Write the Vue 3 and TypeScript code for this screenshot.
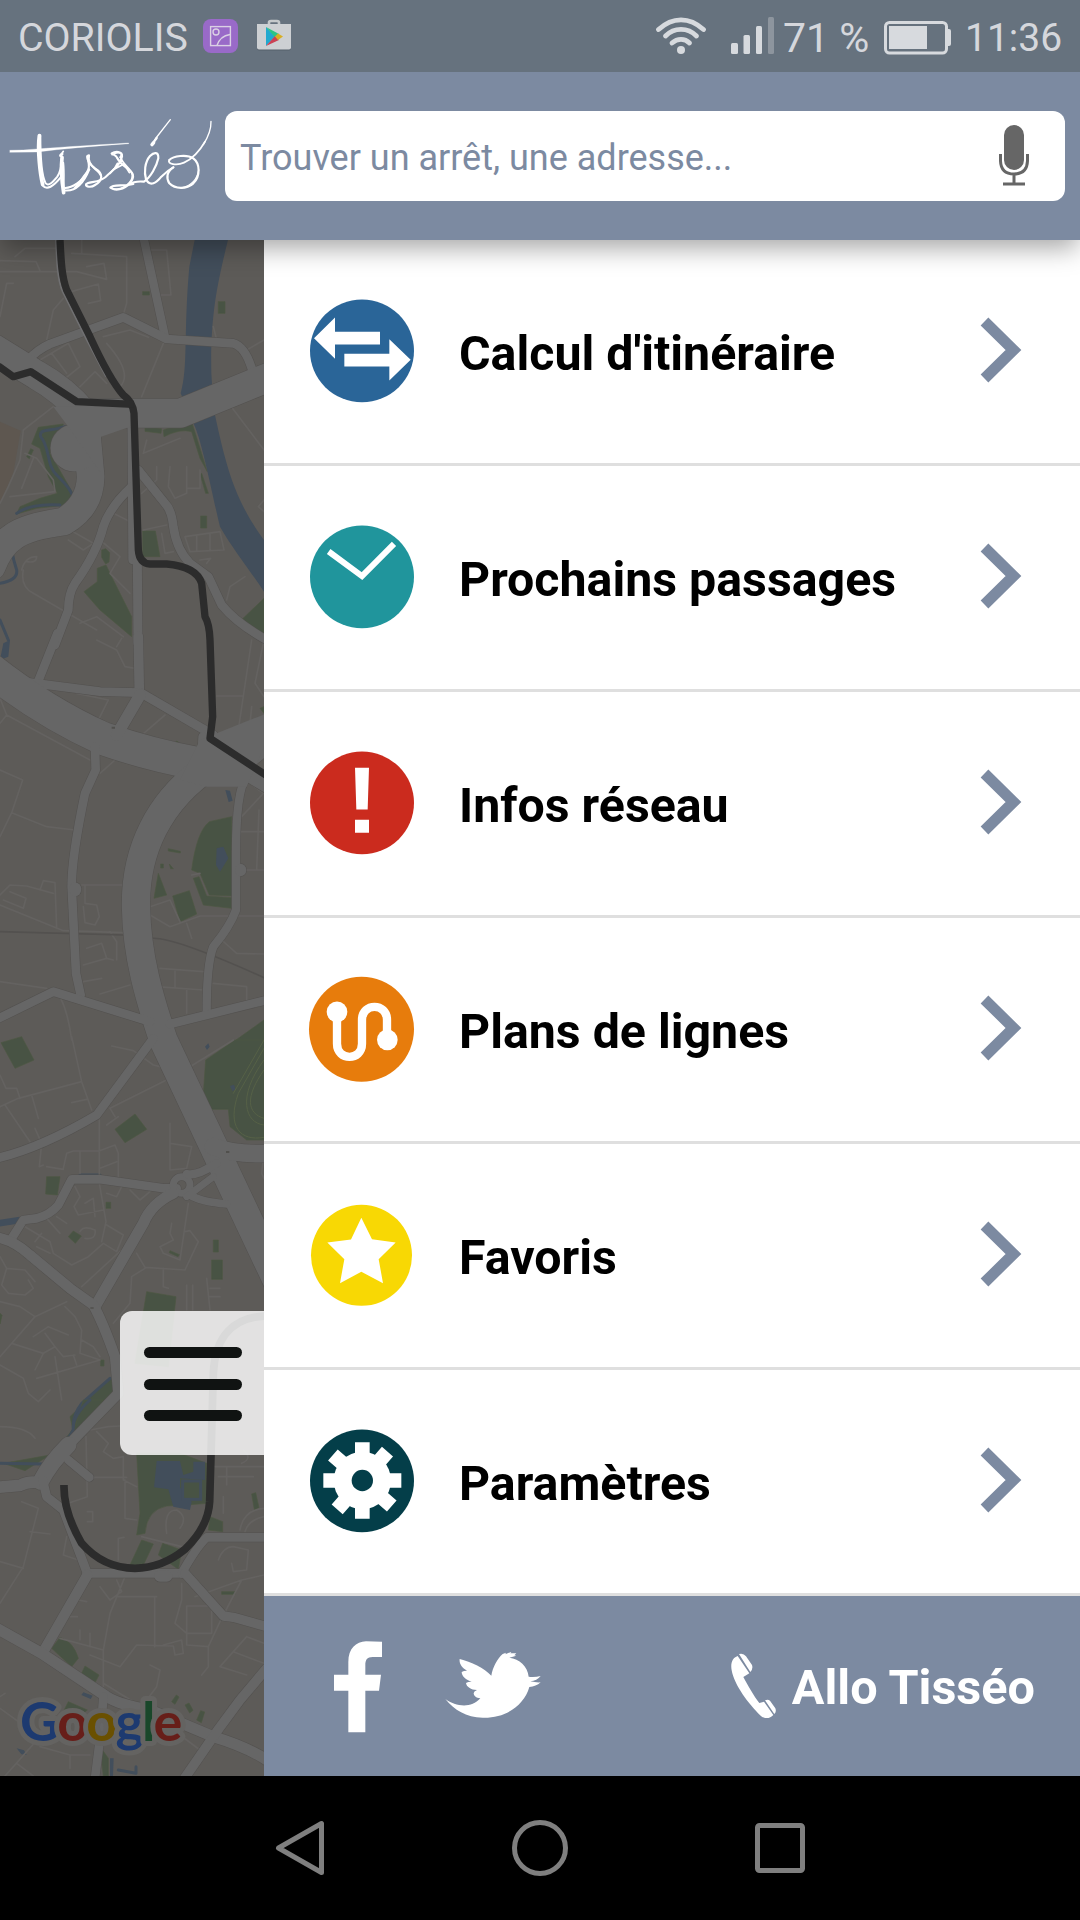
<script setup lang="ts">
interface Road { d: string; w: number }
interface Tile { y: number; parks: string; water: string; streams: string; minor: string; rail?: string; roads: Road[] }
interface Entry { id: string; label: string; box: string }

const entries: Entry[] = [
  { id: 'route', label: "Calcul d'itinéraire", box: '129 111.5 330 330' },
  { id: 'clock', label: 'Prochains passages', box: '129 789.5 330 330' },
  { id: 'info', label: 'Infos réseau', box: '129 87.5 330 330' },
  { id: 'lines', label: 'Plans de lignes', box: '129 765.5 330 330' },
  { id: 'star', label: 'Favoris', box: '129 63.5 330 330' },
  { id: 'gear', label: 'Paramètres', box: '129 741.5 330 330' },
]

const tiles: Tile[] = [
  {
    y: 0,
    parks: 'M492 590L490 570 560 545 575 545 622 695 600 655 575 575Q540 565 492 590ZM558 430l12 30-22 8ZM435 558l50 8-2 14-48-6ZM428 873H466L480 950H428ZM190 552L115 562 95 612 120 625 145 710 172 760 120 775 60 800 50 822 110 805 200 795 222 765 150 640ZM305 930l12-4 12 12-2 28-10 6-12-20ZM318 975L335 1010 395 1130V1190L300 1110 252 1055 292 1025V985ZM792 1075V1185L722 1142ZM428 155h20v10h-20ZM655 185h20v35h-20ZM605 700l20 60h-8l-16-55ZM602 828h18v36h-18ZM80 650l12-24 8 4-12 26Z',
    water: 'M585-5H685C655 120 630 220 634 400L640 500C660 600 680 680 705 745 735 820 770 870 792 900V1055C750 990 700 930 660 860 640 780 610 620 585 560L542 460C565 380 550 280 568 80Z',
    streams: 'M195 560C150 575 115 565 122 590 150 620 140 680 170 705 200 735 215 750 225 790M50 820Q90 790 180 795M35 930Q40 960 50 990 55 1020 0 1030M0 1140L25 1200',
    minor: 'M0 95H230L320 118 312 70 260 80M0 62L108 65 120 92M45 50L75 25H170M215 40L380 50V190L368 230M245 0V40M455 30H500L513 165H470M195 160L295 132 302 182 265 190M140 300L160 210 190 175M0 230L20 130H40M310 290L390 270 445 292M490 310L425 470M320 310Q400 400 360 440M120 360L205 310 240 380 190 420M155 340L200 400M240 440L285 395 320 430M160 500L70 570 60 660 25 740 0 790M75 640L110 655 160 720 165 755 30 770M100 655L65 745M640 260L650 300M740 330L792 300M690 495L792 630M440 600L430 640 540 595M470 680V720L425 760M510 680L505 740 525 775 560 760V680M600 690V745H560M792 780L775 800 792 815M430 870L500 855M485 880L495 940 520 935M555 890L660 875 672 930 570 935ZM590 885V930M630 880V930M70 990Q60 1040 100 1060L290 1170M65 990Q75 950 110 950 110 970 80 965M210 870L280 910 250 930 205 900M300 900L360 950 330 1000 390 1060M340 820L400 850M240 1150L290 1130 370 1190M680 1080L690 1040 735 1010M600 960L632 955 620 970',
    roads: [
      { d: 'M430-10L495 290', w: 24 },
      { d: 'M85 360Q110 330 150 312L370 232 500 297 700 310Q735 320 755 385', w: 25 },
      { d: 'M395 500L398 960', w: 25 },
      { d: 'M-20 325L110 405Q190 450 250 520H540L810 410', w: 86 },
      { d: 'M245 510L262 600 272 710Q270 800 190 845 80 860 40 890 0 915-25 980', w: 82 },
      { d: 'M222 624h2', w: 140 },
      { d: 'M395 740Q330 800 310 860 290 940 225 1030 205 1060 205 1110L165 1215', w: 25 },
      { d: 'M415 690L495 790Q515 810 520 860 530 930 570 970L625 1010 665 1095Q710 1150 800 1200', w: 25 },
      { d: 'M412 960L414 1210', w: 26 },
    ],
  },
  {
    y: 1200,
    parks: 'M695 530L628 545Q590 575 575 690L600 700 628 765 697 768ZM580 715L597 710 620 768 695 773V805L610 795ZM518 768L568 752 590 822 540 845ZM475 700L500 765 462 775ZM708 1200L792 1140V1205ZM780 205l12-5v20ZM520 315l10-12 6 4-10 14ZM505 626l36 8v5l-36-6ZM482 672h8v12h-8Zm26 0l12 14h-8Z',
    water: 'M650 625l20-5 15 35-25 40-12-20ZM676 450l14 2 8 30-12 4ZM10 10L30 0 25 50 0 60Z',
    streams: '',
    minor: 'M0 795L190 872 370 878M0 390L68 420 35 518 0 590M35 518L140 560 225 570M0 175L20 225 270 360M20 225L0 250M0 765L30 735 80 738 160 760M120 750L130 722 165 728 170 865M10 780L70 805 78 775 30 755M245 735H370M255 735V790L290 795 298 830 285 855 255 848 250 800M450 800L510 780 540 845M450 825L510 860 600 828H792M560 850L575 895M720 575H792M735 690H792M777 510L770 690M725 530L790 460 750 430M650 168H730M755 0L715 270M792 0L765 130 792 170M755 200L750 250M480 985L610 995M525 990V1040M470 1040L610 1050M560 1050V1120M640 1030L740 1040V1080M665 900L710 940 792 942M300 1062L390 1035M250 1025L305 1015M0 1025L140 1045M260 925L305 910 320 955 340 960M320 955L250 975M420 290L495 225M290 250L325 180 230 160M290 0L350 30 375 80 405 85M350 20L365-5M300 400L345 360M575 705L600 700M180 1070Q205 1120 215 1200M350 905V960M330 875L350 905',
    rail: 'M0 875L370 885M455 895Q520 890 792 1013',
    roads: [
      { d: 'M172-20L110 135', w: 25 },
      { d: 'M415-10L418 165', w: 28 },
      { d: 'M90 128L300 155 420 158', w: 25 },
      { d: 'M-40 80Q130 215 310 296 450 345 600 372L690 375 810 275', w: 98 },
      { d: 'M640 370C470 480 405 640 408 800 410 950 450 1080 490 1200L830 1920', w: 84 },
      { d: 'M425 160L640 285', w: 26 },
      { d: 'M420 165L350 285', w: 34 },
      { d: 'M608 290L605 350', w: 25 },
      { d: 'M700 375L800 435', w: 45 },
      { d: 'M285 320L287 390 255 460Q215 650 215 740L228 1000 242 1065', w: 25 },
      { d: 'M740 410Q708 450 708 640V810Q690 860 640 920 620 970 620 1115', w: 24 },
      { d: 'M722 688v4', w: 32 },
      { d: 'M226 745v6', w: 34 },
      { d: 'M-10 1138L160 1055 450 1145', w: 25 },
      { d: 'M510 1152L800 1080', w: 25 },
    ],
  },
  {
    y: 2400,
    parks: 'M3 8L65-10 102 60 45 85ZM345 268L405 222 440 268 375 308ZM617 60L705 0H792V300H740L690 260 685 208H607ZM140 410H180L172 465 137 462ZM205 590l15-17 24 15-18 22ZM635 660h32v58h-32ZM640 600h15v36h-15ZM440 755L528 770 505 980 405 970ZM345 1000L355 1070 220 1175 210 1130ZM318 487h14v18h-14ZM302 960h10v18h-10ZM510 632l28 12-4 6-26-12ZM0 820l6 6-6 26Z',
    water: 'M615 20l10-10 4 10-8 10ZM690 138l12-4 4 14-8 6Z',
    streams: 'M330 1015L245 1090Q215 1130 222 1165L205 1200M240 405H300',
    minor: 'M0 200L55 175 245 125M215-10L245 125 275 210M215 188L260 178M15 195L90 305M0 105L18 145 50 145 60 175M95 165L115 235M105 265L125 310 118 380 130 375M335 18L400 32 460 75 480 80M570 80L700 0M330 205L495 122M345 230L330 205M320 255L355 230M298 240V405M190 385L200 340 220 333H297L345 315 355 340V410M240 335V400M300 385L350 365M140 380L190 388M510 250V390L560 385 575 320 510 310M792 340L785 400 792 415M225 440L240 470 222 500 235 525 310 510M255 490L280 475 285 530M298 430L318 545 305 605M320 460L350 470 370 430M390 450L420 480 450 455M170 530L200 550M140 535L180 580M75 560L150 605 160 640 215 675 265 650 310 610 350 635 370 585 320 555M105 605L125 580M110 620L150 640M240 575Q250 555 285 570 290 600 255 595M245 740L370 625M410 640L435 682 555 690 595 605 570 572 555 575M515 550L510 580 520 600 480 620 490 640 540 660 565 490M490 685V740L505 745M435 685L395 710 390 790 340 850M560 735V810M578 735V810M620 715L630 810M630 745H660M630 770H660M0 650L20 685 5 735 25 760 75 765 100 745 85 720M20 685L75 690 105 725M0 950L105 830 200 785M0 785L60 800 105 830M100 890L145 860 205 885M195 800L225 830 245 870 240 940 300 960M35 910L130 940 165 920 190 950 225 945M135 880L165 920M130 940L105 990M165 950L185 1080M110 1015L300 960M0 975L70 1015 85 1060 115 1085 150 1050M245 900L280 920 300 950M220 945L230 975',
    roads: [
      { d: 'M-10 355Q120 325 290 225L460-5', w: 25 },
      { d: 'M35 595L70 540 110 535Q150 525 175 495L215 418 300 418 490 445 530 445', w: 25 },
      { d: 'M520 435a25 25 0 1 1 50 0a25 25 0 1 1 -50 0', w: 20 },
      { d: 'M570 465Q600 485 680 492', w: 22 },
      { d: 'M560 402Q590 410 650 370', w: 24 },
      { d: 'M560 470L640 410', w: 20 },
      { d: 'M640 320Q700 345 810 340', w: 52 },
      { d: 'M520 460Q455 490 430 550L285 800', w: 32 },
      { d: 'M-10 592Q40 600 90 645L210 745 280 795Q310 850 345 950L355 1060 205 1215', w: 30 },
    ],
  },
  {
    y: 3480,
    parks: 'M410 160H540L620 190V310L560 315 500 318Q440 330 435 400L410 405 420 340ZM425 420L460 432 430 495H390ZM488 430L545 450 535 508 475 465ZM630 350L668 365V395L625 390ZM180 712Q220 725 235 775L215 800 155 745ZM255 798L297 825 283 852 240 830ZM205 905L262 930 250 940 190 935ZM250 0H310L190 145 140 185 225 80ZM10 190L150 165 75 212ZM755 282l12-4 10 45-14 6ZM665 575h40v8h-40ZM515 905l14-20 8 6-12 22ZM555 915l12-6 12 22-10 8ZM590 960l12-28 12 4-10 32ZM300 1040L325 1075V1128H310Z',
    water: 'M470 183H540L550 225 580 215V185H615V240L540 235V262L575 305 570 330 520 320 505 268 462 262ZM250 877l28 10-6 10-28-12ZM50 1045l22 6 8 14-16-2ZM330 1075h11l-2 53h-9Z',
    streams: 'M270 0Q215 50 220 90 200 130 130 192L0 190M355 1110L408 1120V1100',
    minor: 'M0 80Q80 80 105 115M270 90L325 80 360 78M290 95L325 130 310 155 340 175 370 170V240L410 260M258 110L262 290 205 310M262 232H380M375 240V355L410 360M65 305L115 325 70 500 0 610M0 485L70 505M90 395L150 402M200 410L190 465 235 480M262 335H278V365H262M355 480V415L372 412M375 530L330 640 310 750V890M300 560L330 600 365 575 350 540M464 590V740M350 590H470M235 600L260 605M210 650H232M180 715L310 750M240 690V720M270 700V740M360 800L410 735 520 738 525 765 550 760 545 720 490 735M270 765L360 800M450 795L480 810 470 860 440 900M560 618H635V700H560ZM545 550V600L525 670 560 700M560 700V735L625 740V800L605 825M725 540L660 665 625 740M585 590L725 540 792 525M740 710L660 800 740 825M740 710L792 730M700 755L792 790M425 410L545 440M500 400Q490 330 530 330 565 350 540 385M640 200H792M680 200V255M655 230H760M670 290V340M725 190Q760 175 730 150M792 325Q730 330 720 390M792 350Q745 360 735 395M655 480Q670 440 700 440L745 450 740 510 700 515 695 490M310 850L400 905M520 990L600 1050M0 890L15 880M0 925L90 990M15 1128L120 1010M50 1090L100 1128M120 1040L210 1065H270M210 1065V1105',
    roads: [
      { d: 'M205 180L268 232', w: 25 },
      { d: 'M205 135Q150 190 122 245', w: 48 },
      { d: 'M125 250Q90 240 60 256L-10 262', w: 34 },
      { d: 'M128 240L140 290 190 330 260 515', w: 26 },
      { d: 'M260 520H545', w: 25 },
      { d: 'M480 528h20', w: 34 },
      { d: 'M545 520Q590 440 620 412H800', w: 25 },
      { d: 'M555 520L670 648 700 652 800 680', w: 27 },
      { d: 'M262 525L130 755', w: 30 },
      { d: 'M-15 682L125 760 320 890Q360 915 450 930L640 1010Q740 1040 800 1080', w: 32 },
      { d: 'M310 890L302 1000 285 1135', w: 25 },
      { d: 'M800 805L720 900 650 995 550 1140', w: 28 },
    ],
  },
]
</script>

<template>
  <div class="screen">
    <header class="status">
      <span class="carrier">CORIOLIS</span>
      <svg class="gallery" width="35" height="34" viewBox="0 0 35 34">
        <rect width="35" height="34" rx="8" fill="#996ac8" />
        <g fill="none" stroke="#dad0e4" stroke-width="1.400">
          <rect x="7.600" y="7.600" width="19.800" height="19" />
          <circle cx="13" cy="13" r="3" />
          <path d="M14 26.500Q17 17 27 15.500" />
        </g>
      </svg>
      <svg class="store" width="34" height="32" viewBox="0 0 34 32">
        <path d="M12 6V3.500Q12 2 14 2H20Q22 2 22 3.500V6" fill="none" stroke="#c5c9cb" stroke-width="2.600" />
        <path d="M0 6H34V29Q34 31.500 32 31.500H2Q0 31.500 0 29Z" fill="#55606b" />
        <path d="M0 5H34V28.500Q34 30.500 32 30.500H2Q0 30.500 0 28.500Z" fill="#cdd0d3" />
        <path d="M9 8L18 17.500 9 27Z" fill="#22a9cf" />
        <path d="M9 8L22 15 18 18.500Z" fill="#2cc584" />
        <path d="M9 27L22 21 18 17Z" fill="#ca4254" />
        <path d="M21 14.500L26 17.500 21 21 18 17.500Z" fill="#d8ae23" />
      </svg>
      <span class="spacer"></span>
      <svg class="wifi" width="50" height="38" viewBox="0 0 50 38">
        <g fill="none" stroke="#d7dade" stroke-width="4.800" stroke-linecap="round">
          <path d="M2.500 12.500Q13 2.800 25 2.800T47.500 12.500" />
          <path d="M9.500 19Q16 12.300 25 12.300T40.500 19" />
          <path d="M16 26Q20 22.300 25 22.300T33.500 26" />
        </g>
        <circle cx="25" cy="33" r="4" fill="#d7dade" />
      </svg>
      <svg class="signal" width="43" height="38" viewBox="0 0 43 38" fill="#d7dade">
        <rect y="26" width="7" height="11" rx="1.500" />
        <rect x="12.500" y="18" width="6.500" height="19" rx="1.500" />
        <rect x="25" y="9" width="6" height="28" rx="1.500" />
        <rect x="37" width="6" height="37" rx="1.500" fill="#8d959e" />
      </svg>
      <span class="percent">71 %</span>
      <svg class="battery" width="67" height="34" viewBox="0 0 67 34">
        <rect x="1.500" y="1.500" width="61" height="30.500" rx="4" fill="none" stroke="#d7dade" stroke-width="3" />
        <path d="M5 5H43V28H5ZM64 8H65Q67 8 67 10V23Q67 25 65 25H64Z" fill="#d7dade" />
      </svg>
      <span class="time">11:36</span>
    </header>

    <div class="bar">
      <svg class="logo" width="225" height="100" viewBox="0 -12 675 300" fill="none" stroke="#fff" stroke-linecap="round" stroke-linejoin="round">
        <path d="M30 121L70 120Q200 110 386 99V101Q220 112 110 126L30 127Z" fill="#fff" stroke="#fff" stroke-width="1" />
        <path d="M118 77C112 120 120 190 128 224" stroke-width="11" />
        <path d="M121 76C121 130 122 190 136 218 145 232 160 215 172 200 180 188 185 165 187 142" stroke-width="6" />
        <path d="M128 226C140 242 160 230 184 200" stroke-width="6" />
        <path d="M186 143C182 180 188 230 191 248" stroke-width="11" />
        <path d="M190 158C194 190 190 225 192 248M181 138L186 130 190 124" stroke-width="5" />
        <path d="M182 136L186 132" stroke-width="9" />
        <path d="M194 234C215 235 248 215 262 185 274 165 262 155 262 138L267 136Q262 160 285 175C310 190 310 210 285 225 272 234 258 230 258 224" stroke-width="6.500" />
        <path d="M192 241C225 246 250 222 268 178M262 140C262 168 298 180 302 196M222 236C238 222 245 205 262 186" stroke-width="6" />
        <path d="M258 224C262 212 300 222 322 196 345 176 362 162 366 140 368 122 345 124 335 130Q350 138 352 145 360 160 378 172C402 188 405 200 390 220 372 240 345 243 331 233 338 222 370 230 400 222" stroke-width="6.500" />
        <path d="M336 134C355 124 372 128 360 142M362 142C368 165 395 175 397 196 398 220 368 238 342 238M352 160L342 178 372 162 388 188M365 150L330 190" stroke-width="5" />
        <path d="M385 224Q405 212 432 215C452 202 470 168 475 145 476 125 462 126 450 138 434 156 432 188 438 208 450 232 470 218 484 200 498 186 505 180 520 172" stroke-width="6.500" />
        <path d="M520 172C500 185 498 205 508 220 525 238 560 238 580 220 602 198 600 160 580 145 560 132 520 138 508 150" stroke-width="6.500" />
        <path d="M508 150C500 162 530 168 552 158 575 148 600 122 615 95" stroke-width="5.500" />
        <path d="M610 104Q634 66 633 34M545 234Q590 222 596 180" stroke-width="4" />
        <path d="M456 104L468 84 511 29" stroke-width="4" />
        <path d="M456 103L470 84" stroke-width="7" />
        <path d="M456 104L461 98" stroke-width="10" />
      </svg>
      <div class="search">
        <span>Trouver un arrêt, une adresse...</span>
        <svg width="30" height="62" viewBox="0 0 30 62">
          <rect x="5" y="0" width="20" height="45" rx="10" fill="#666" />
          <path d="M1.500 29V36Q2 49 15 49T28.500 36V29M15 49V59M4 59H26" fill="none" stroke="#666" stroke-width="3" />
        </svg>
      </div>
    </div>

    <main class="body">
      <section class="map">
        <svg width="264" height="1536" viewBox="0 0 792 4608">
          <rect width="792" height="4608" fill="#5d5b58" />
          <path d="M0 545L62 572 40 700 0 790Z" fill="#5e5750" />
          <g v-for="t in tiles" :key="'p' + t.y" :transform="`translate(0 ${t.y})`">
            <path :d="t.parks" fill="#485344" stroke="#4d5843" stroke-width="2" />
            <path :d="t.water" fill="#424e5b" />
            <path :d="t.streams" class="line" stroke="#424e5b" stroke-width="9" />
            <path :d="t.minor" class="line" stroke="#646260" stroke-width="5" />
            <path v-if="t.rail" :d="t.rail" class="line" stroke="#53514f" stroke-width="5" />
          </g>
          <path d="M-5 2950L60 2940" stroke="#424e5b" stroke-width="20" />
          <path d="M792 2425L715 2560C680 2660 720 2705 792 2692M792 2400L700 2560M792 2490C735 2570 740 2620 792 2635M792 2460C710 2570 735 2650 792 2655" class="line" stroke="#566147" stroke-width="3" />
          <rect x="548" y="3723" width="54" height="55" fill="#485344" stroke="#424e5b" stroke-width="9" />
          <g v-for="t in tiles" :key="'c' + t.y" :transform="`translate(0 ${t.y})`">
            <path v-for="(r, i) in t.roads" :key="i" :d="r.d" class="line" stroke="#53514f" :stroke-width="r.w + 4" />
          </g>
          <g v-for="t in tiles" :key="'r' + t.y" :transform="`translate(0 ${t.y})`">
            <path v-for="(r, i) in t.roads" :key="i" :d="r.d" class="line" stroke="#666" :stroke-width="r.w + 1" />
          </g>
          <path d="M160 500H390V560L303 590V700L205 560ZM600 1500L800 1420V1500L740 1640H620L540 1620Z" fill="#666" />
          <path d="M340 1460v6M276 3202v4M683 2733v6" stroke="#51504d" stroke-width="10" />
          <path d="M168 0C170 60 172 120 188 155L258 295 318 410" fill="none" stroke="#707072" stroke-width="5" />
          <g fill="none" stroke="#2c2c2c" stroke-width="22" stroke-linejoin="round">
            <path d="M180 0C183 60 185 110 200 150L270 290Q330 420 370 465 398 485 402 520L415 930Q418 970 450 972H500Q590 980 605 1030L615 1130Q628 1150 630 1200L638 1430 630 1495 800 1607" />
            <path d="M-5 378L40 410 92 395 230 485 400 493" />
            <path d="M800 3228C700 3230 645 3290 640 3400L629 3785Q625 3860 555 3928 485 3985 405 3985 310 3985 245 3910 190 3815 192 3735" stroke-width="23" />
          </g>
          <text class="google" x="60" y="4504" textLength="487" stroke="#646361" stroke-width="30" stroke-linejoin="round"><tspan fill="#1d3a70">G</tspan><tspan fill="#671e19">o</tspan><tspan fill="#6a5000">o</tspan><tspan fill="#1d3a70">g</tspan><tspan fill="#19472a">l</tspan><tspan fill="#671e19">e</tspan></text>
        </svg>
        <div class="handle"><i></i><i></i><i></i></div>
      </section>

      <aside class="drawer">
        <div v-for="e in entries" :key="e.id" class="row">
          <svg class="icon" width="110" height="110" :viewBox="e.box">
            <g v-if="e.id === 'route'">
              <ellipse cx="294" cy="273" rx="156" ry="154" fill="#2a6598" />
              <path d="M150 235L213 173V216H348V254H213V297ZM440 300L376 238V282H241V320H376V362Z" fill="#fff" />
            </g>
            <g v-else-if="e.id === 'clock'">
              <ellipse cx="294" cy="951" rx="156" ry="154" fill="#20959c" />
              <path d="M194 875L294 949 390 852" fill="none" stroke="#fff" stroke-width="18" />
            </g>
            <g v-else-if="e.id === 'info'">
              <ellipse cx="294" cy="249" rx="156" ry="154" fill="#cb2b1e" />
              <path d="M273 144H315L311 269H277ZM273 300H315V339H273Z" fill="#fff" />
            </g>
            <g v-else-if="e.id === 'lines'">
              <circle cx="292.500" cy="928.500" r="157.500" fill="#e77c0c" />
              <path d="M219 876V972C219 1024 294 1024 294 972V900C294 848 369 848 369 900V960" fill="none" stroke="#fff" stroke-width="25" />
              <circle cx="219" cy="876" r="31" fill="#fff" />
              <circle cx="370" cy="960" r="31" fill="#fff" />
            </g>
            <g v-else-if="e.id === 'star'">
              <circle cx="292.500" cy="226.500" r="151.500" fill="#f8d804" />
              <path d="M292 114L324 178 395 188 344 238 357 310 292 276 228 310 241 238 190 188 261 179Z" fill="#fff" />
            </g>
            <g v-else>
              <ellipse cx="294" cy="903" rx="156" ry="154" fill="#043e49" />
              <g fill="#fff">
                <circle cx="295" cy="902" r="86" />
                <path d="M273 787H317V1017H273ZM178 880H412V924H178Z" />
                <path d="M273 787H317V1017H273ZM178 880H412V924H178Z" transform="rotate(41 295 902)" />
              </g>
              <circle cx="295" cy="902" r="32" fill="#043e49" />
            </g>
          </svg>
          <span class="label">{{ e.label }}</span>
          <svg class="chevron" width="42" height="66" viewBox="0 0 42 66">
            <path d="M4.500 4.500L33.500 33 4.500 61.500" fill="none" stroke="#7c8aa1" stroke-width="11" />
          </svg>
        </div>
        <footer class="foot">
          <svg class="fb" width="48" height="92" viewBox="209 182 144 276">
            <path d="M252 456V331H209V283H252V245C252 205 275 184 305 183L353 184V230H325C308 230 303 238 303 255V283H350L344 331H303V456Z" fill="#fff" />
          </svg>
          <svg class="tw" width="96" height="68" viewBox="542 216 288 204">
            <path d="M543 357C575 380 620 386 648 355 635 355 628 346 628 340Q628 334 638 330C620 330 606 320 605 309Q610 305 622 305C605 300 592 288 592 276Q598 272 608 272C592 264 584 250 586 237 620 245 660 265 681 287 685 262 700 235 715 222L725 218 723 223 742 215 738 220 756 220 750 226 756 227 735 233C765 237 790 258 793 290Q812 292 829 288 818 302 798 304 815 308 829 307 815 320 795 321C780 375 725 415 655 413 605 412 570 390 543 357Z" fill="#fff" />
          </svg>
          <span class="spacer"></span>
          <svg class="phone" width="46" height="66" viewBox="201 220 138 198">
            <path d="M221 229C205 235 199 250 203 272 210 315 255 375 290 408 300 418 318 418 328 406L300 366 286 370C270 350 250 315 238 292L256 281ZM225 223Q238 219 246 230L264 256Q268 268 259 277ZM303 362Q312 358 318 363L334 386Q338 396 331 403Z" fill="#fff" />
          </svg>
          <span class="call">Allo Tisséo</span>
        </footer>
      </aside>
    </main>

    <nav class="nav">
      <span><svg width="52" height="56" viewBox="0 0 52 56"><path d="M4.500 28L47.500 3.500V52.500Z" /></svg></span>
      <span><svg width="56" height="56" viewBox="0 0 56 56"><circle cx="28" cy="28" r="25.500" /></svg></span>
      <span><svg width="50" height="50" viewBox="0 0 50 50"><rect x="2.500" y="2.500" width="45" height="45" rx="2" /></svg></span>
    </nav>
  </div>
</template>

<style>
body { margin: 0; background: #000; }
</style>

<style scoped>
.screen { width: 1080px; height: 1920px; display: flex; flex-direction: column; overflow: hidden; font-family: Roboto, "Liberation Sans", sans-serif; }
svg { display: block; flex: none; }
.spacer { flex: 1; }
.status { height: 72px; flex: none; display: flex; align-items: center; background: #66727e; color: #d5d7dc; font-size: 39px; line-height: 68px; padding: 0 18px; box-sizing: border-box; white-space: nowrap; position: relative; z-index: 3; }
.carrier { width: 185px; padding-top: 4px; font-size: 39.3px; }
.store { margin-left: 19px; margin-bottom: 3px; }
.signal { margin-left: 25px; }
.percent { margin-left: 9px; width: 101px; padding-top: 4px; font-size: 41px; }
.battery { margin-top: 3px; }
.time { margin-left: 14px; width: 97px; padding-top: 4px; }
.bar { height: 168px; flex: none; display: flex; align-items: center; background: #7c8aa1; box-shadow: 0 10px 24px -2px rgba(0, 0, 0, 0.35); position: relative; z-index: 2; }
.search { width: 840px; height: 90px; box-sizing: border-box; background: #fff; border-radius: 12px; display: flex; align-items: center; justify-content: space-between; padding: 0 36px 0 15px; color: #7c8aa1; font-size: 36px; }
.search span { padding-top: 4px; }
.body { height: 1536px; flex: none; display: flex; }
.map { width: 264px; position: relative; flex: none; overflow: hidden; }
.line { fill: none; stroke-linejoin: round; stroke-linecap: round; }
.google { font-family: Lato, sans-serif; font-weight: 700; font-size: 162px; paint-order: stroke; }
.handle { position: absolute; top: 1071px; left: 120px; width: 144px; height: 144px; box-sizing: border-box; border-radius: 12px 0 0 12px; background: rgba(255, 255, 255, 0.82); display: flex; flex-direction: column; gap: 20.5px; padding: 36px 22px 0 24px; }
.handle i { height: 11px; border-radius: 6px; background: #101312; }
.drawer { flex: 1; background: #fff; }
.row { height: 226px; box-sizing: border-box; border-bottom: 3px solid #dfdfdf; display: flex; align-items: center; padding: 0 58px 0 43px; }
.label { flex: 1; margin-left: 42px; padding-top: 4px; font-size: 48.3px; font-weight: 700; color: #000; white-space: nowrap; }
.chevron { margin-bottom: 3px; }
.foot { height: 180px; box-sizing: border-box; background: #7c8aa1; display: flex; align-items: center; padding: 0 45px 0 70px; }
.fb { margin-top: 2px; }
.tw { margin-left: 63px; }
.phone { margin-right: 15px; }
.call { font-size: 48.6px; font-weight: 700; color: #fff; white-space: nowrap; padding-top: 2px; }
.nav { height: 144px; flex: none; background: #000; display: flex; justify-content: center; }
.nav span { width: 240px; display: flex; align-items: center; justify-content: center; }
.nav svg { fill: none; stroke: #7f7f7f; stroke-width: 5; stroke-linejoin: round; }
</style>
